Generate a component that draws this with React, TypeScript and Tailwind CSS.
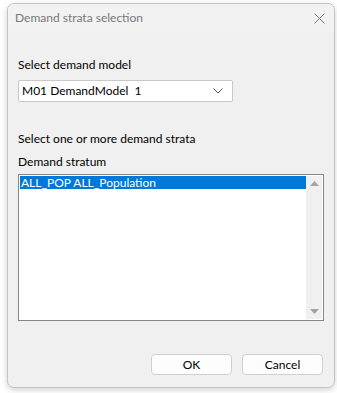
export default function App() {
  return (
    <div className="w-[337px] h-[393px] bg-white pt-[3px] pl-[7px] font-['Lato',sans-serif] text-[12px] text-black">
      <div className="w-[328px] h-[385px] rounded-[7px] border border-[#c4c4c4] bg-[#f0f0f0] shadow-[0_2px_6px_rgba(0,0,0,0.18)] flex flex-col overflow-hidden">
        <div className="h-[28px] flex items-center justify-between pl-[7px] pr-[9px] bg-[#f2f2f2]">
          <span className="text-[#777] text-[12px]">Demand strata selection</span>
          <svg width="11" height="11" viewBox="0 0 11 11" className="text-[#7a7a7a]">
            <path d="M0.5 0.5 L10.5 10.5 M10.5 0.5 L0.5 10.5" stroke="currentColor" strokeWidth="1" fill="none" />
          </svg>
        </div>
        <div className="flex-1 flex flex-col px-[10px]">
          <div className="mt-[25px] leading-[16px]">Select demand model</div>
          <div className="mt-[7px] w-[215px] h-[22px] bg-white border border-[#c8c8c8] rounded-[2px] flex items-center justify-between pl-[3px] pr-[9px]">
            <span>M01 DemandModel&nbsp; 1</span>
            <svg width="10" height="6" viewBox="0 0 10 6">
              <path d="M0.5 0.5 L5 5 L9.5 0.5" stroke="#555" strokeWidth="1" fill="none" />
            </svg>
          </div>
          <div className="mt-[29px] leading-[16px]">Select one or more demand strata</div>
          <div className="mt-[7px] leading-[16px]">Demand stratum</div>
          <div className="mt-[4px] w-[306px] h-[147px] bg-white border border-[#828790] flex p-[1px]">
            <div className="flex-1">
              <div className="h-[13px] bg-[#0078d7] text-white leading-[13px] pl-[1px]">ALL_POP ALL_Population</div>
            </div>
            <div className="w-[16px] bg-[#f0f0f0] flex flex-col items-center justify-between py-[5px]">
              <svg width="9" height="5" viewBox="0 0 9 5">
                <path d="M0 5 L4.5 0 L9 5 Z" fill="#a3a3a3" />
              </svg>
              <svg width="9" height="5" viewBox="0 0 9 5">
                <path d="M0 0 L4.5 5 L9 0 Z" fill="#a3a3a3" />
              </svg>
            </div>
          </div>
          <div className="mt-[33px] flex justify-end gap-[10px] pr-[1px]">
            <button className="w-[81px] h-[21px] bg-[#fdfdfd] border border-[#d0d0d0] rounded-[4px] text-[12px]">OK</button>
            <button className="w-[81px] h-[21px] bg-[#fdfdfd] border border-[#d0d0d0] rounded-[4px] text-[12px]">Cancel</button>
          </div>
        </div>
      </div>
    </div>
  );
}
